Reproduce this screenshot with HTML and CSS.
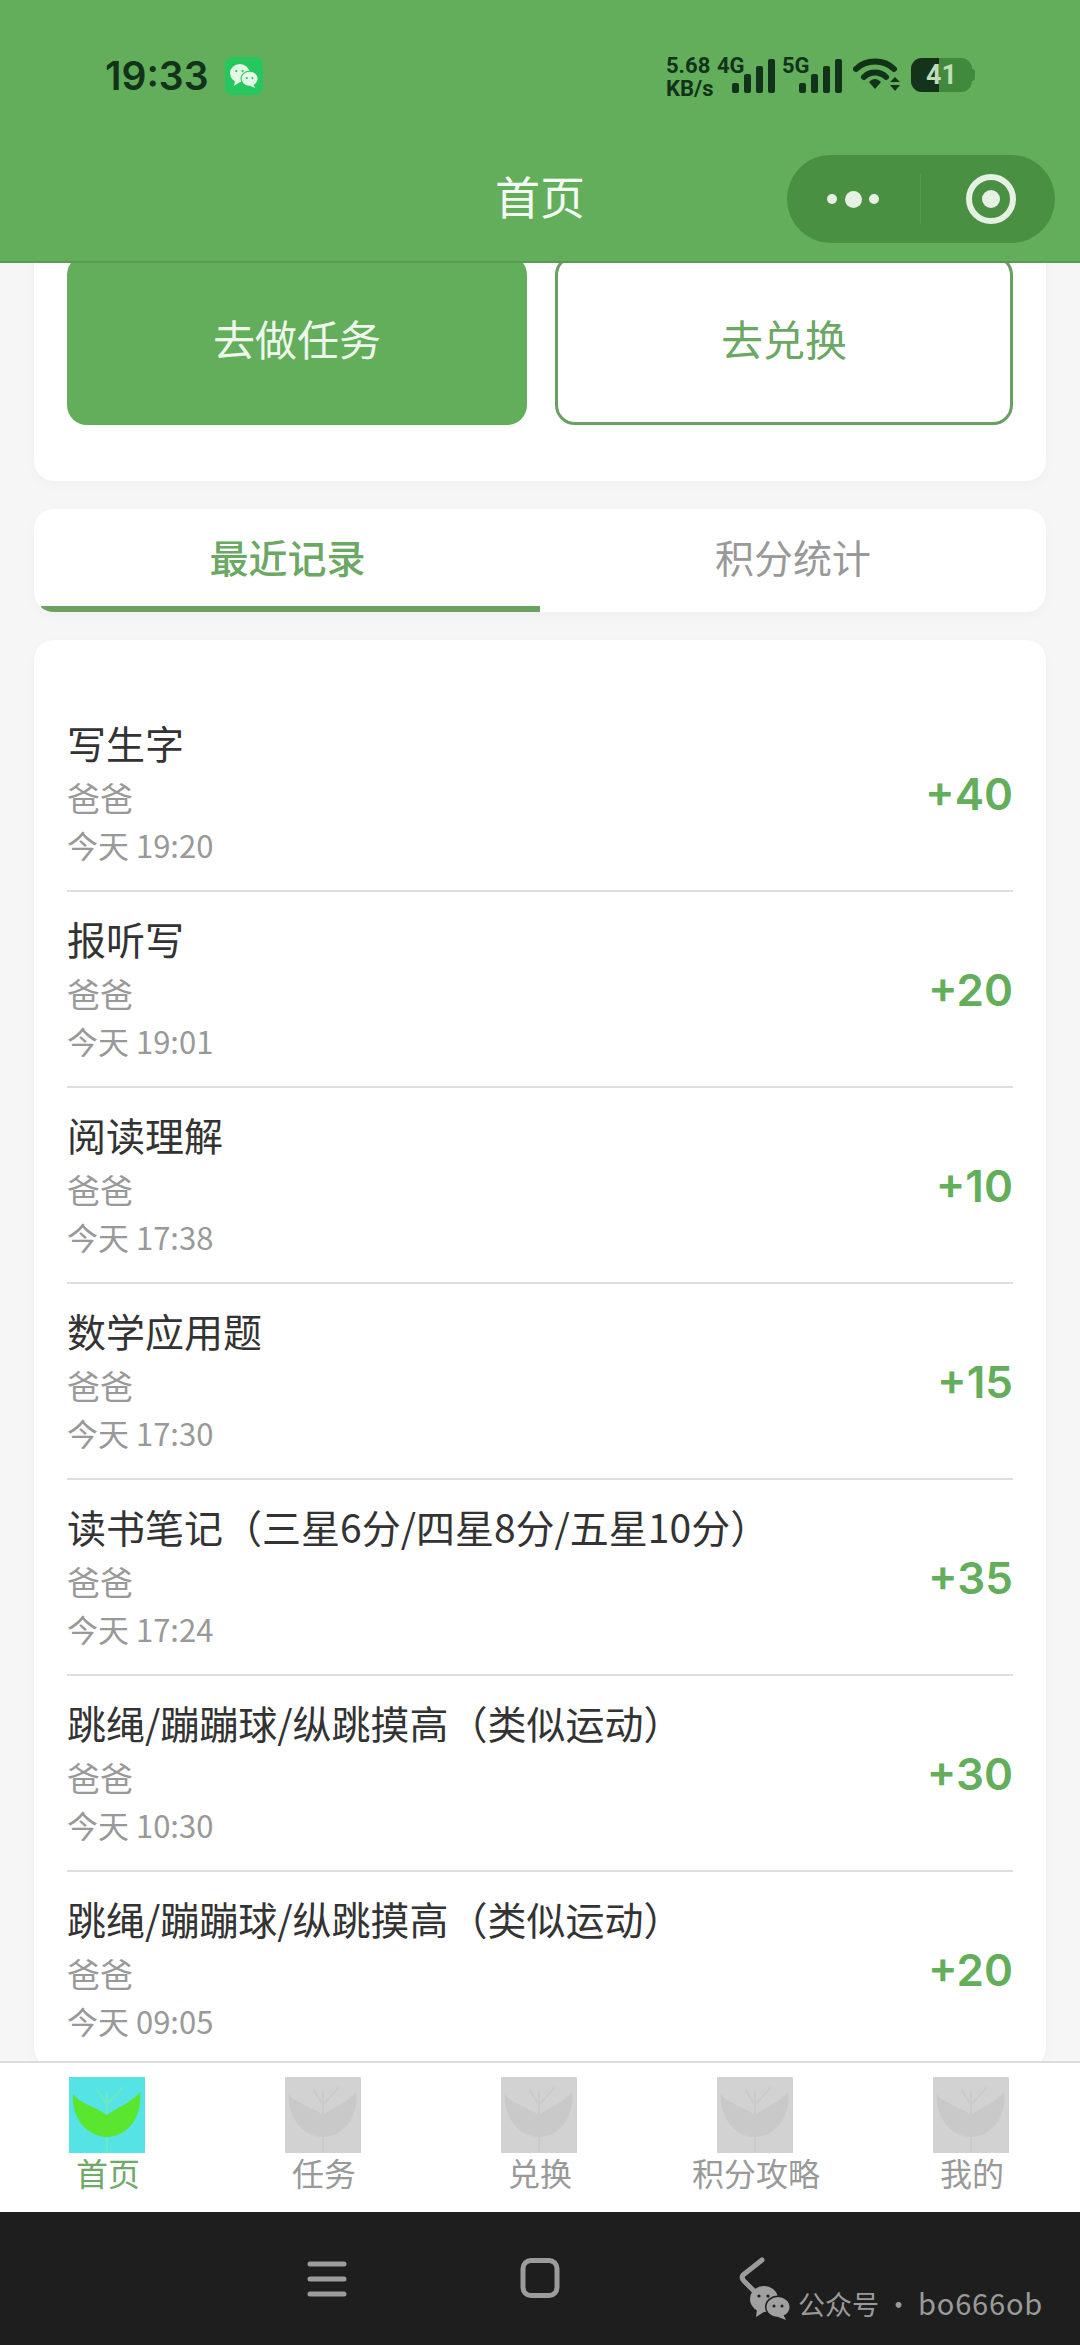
FILE: index.html
```html
<!DOCTYPE html>
<html lang="zh-CN">
<head>
  <meta charset="UTF-8" />
  <meta name="viewport" content="width=device-width, initial-scale=1" />
  <title>首页</title>
  <link rel="stylesheet" href="styles.css">
</head>
<body>
  <svg class="defs" width="0" height="0" aria-hidden="true">
    <symbol id="signal" viewBox="0 0 44 34">
      <rect x="1" y="24" width="7" height="10" rx="2"/>
      <rect x="13" y="15" width="7" height="19" rx="2"/>
      <rect x="25" y="7" width="7" height="27" rx="2"/>
      <rect x="37" y="0" width="7" height="34" rx="2"/>
    </symbol>
    <symbol id="leaf" viewBox="0 0 76 76">
      <rect class="leaf-bg" width="76" height="76"/>
      <path class="leaf-stem" d="M38 76 V14 M38 28 L28 12 M38 28 L54 10"/>
      <path class="leaf-shape" d="M4 17 C10 26 27 30 38 38 C49 30 62 26 71 15 C74 40 58 60 38 60 C18 60 2 40 4 17 Z"/>
    </symbol>
    <symbol id="wechat" viewBox="0 0 40 34">
      <ellipse cx="14" cy="13" rx="14" ry="13"/>
      <path d="M7 23 L6 31 L14 26 Z"/>
      <ellipse class="wechat-cut" cx="28" cy="21" rx="13" ry="11.5"/>
      <ellipse cx="28" cy="21" rx="11.5" ry="10"/>
      <path d="M33 28 L36 34 L28 31 Z"/>
      <circle class="wechat-cut" cx="9" cy="10" r="1.6"/>
      <circle class="wechat-cut" cx="18" cy="10" r="1.6"/>
      <circle class="wechat-cut" cx="24" cy="20" r="1.5"/>
      <circle class="wechat-cut" cx="32" cy="20" r="1.5"/>
    </symbol>
  </svg>

  <header class="top">
    <div class="status-bar">
      <div class="status-left">
        <span class="clock">19:33</span>
        <span class="wechat-badge"><svg width="28" height="24"><use href="#wechat"/></svg></span>
      </div>
      <div class="status-right">
        <div class="net-speed"><span>5.68</span><span>KB/s</span></div>
        <div class="sim"><span class="sim-label">4G</span><svg class="signal" width="44" height="34"><use href="#signal"/></svg></div>
        <div class="sim sim-five"><span class="sim-label">5G</span><svg class="signal" width="44" height="34"><use href="#signal"/></svg></div>
        <svg class="wifi" width="48" height="34" viewBox="0 0 48 34">
          <path class="wifi-arc" d="M3 11 C13 1 31 1 41 11"/>
          <path class="wifi-arc" d="M11 19 C17 13 27 13 33 19"/>
          <path d="M16 24 C20 20 24 20 28 24 L22 31 Z"/>
          <path d="M42 19 L47 24 H37 Z M37 27 H47 L42 33 Z"/>
        </svg>
        <div class="battery">
          <span class="battery-body"><span class="battery-level"></span><span class="battery-num">41</span></span>
          <span class="battery-tip"></span>
        </div>
      </div>
    </div>
    <div class="title-bar">
      <span></span>
      <h1 class="page-title">首页</h1>
      <div class="capsule">
        <div class="capsule-dots"><i></i><i class="big"></i><i></i></div>
        <div class="capsule-line"></div>
        <div class="capsule-ring"><i></i></div>
      </div>
    </div>
  </header>

  <main class="content">
    <section class="card action-card">
      <button class="action-btn primary">去做任务</button>
      <button class="action-btn outline">去兑换</button>
    </section>

    <nav class="card tabs">
      <div class="tab active">最近记录</div>
      <div class="tab">积分统计</div>
    </nav>

    <section class="card records">
      <div class="record">
        <div class="record-info"><div class="record-name">写生字</div><div class="record-who">爸爸</div><div class="record-time">今天 19:20</div></div>
        <div class="record-score">+40</div>
      </div>
      <div class="record">
        <div class="record-info"><div class="record-name">报听写</div><div class="record-who">爸爸</div><div class="record-time">今天 19:01</div></div>
        <div class="record-score">+20</div>
      </div>
      <div class="record">
        <div class="record-info"><div class="record-name">阅读理解</div><div class="record-who">爸爸</div><div class="record-time">今天 17:38</div></div>
        <div class="record-score">+10</div>
      </div>
      <div class="record">
        <div class="record-info"><div class="record-name">数学应用题</div><div class="record-who">爸爸</div><div class="record-time">今天 17:30</div></div>
        <div class="record-score">+15</div>
      </div>
      <div class="record">
        <div class="record-info"><div class="record-name">读书笔记（三星6分/四星8分/五星10分）</div><div class="record-who">爸爸</div><div class="record-time">今天 17:24</div></div>
        <div class="record-score">+35</div>
      </div>
      <div class="record">
        <div class="record-info"><div class="record-name">跳绳/蹦蹦球/纵跳摸高（类似运动）</div><div class="record-who">爸爸</div><div class="record-time">今天 10:30</div></div>
        <div class="record-score">+30</div>
      </div>
      <div class="record">
        <div class="record-info"><div class="record-name">跳绳/蹦蹦球/纵跳摸高（类似运动）</div><div class="record-who">爸爸</div><div class="record-time">今天 09:05</div></div>
        <div class="record-score">+20</div>
      </div>
    </section>
  </main>

  <footer class="tabbar">
    <div class="tabbar-item active"><svg class="tabbar-icon" width="76" height="76"><use href="#leaf"/></svg><span>首页</span></div>
    <div class="tabbar-item"><svg class="tabbar-icon" width="76" height="76"><use href="#leaf"/></svg><span>任务</span></div>
    <div class="tabbar-item"><svg class="tabbar-icon" width="76" height="76"><use href="#leaf"/></svg><span>兑换</span></div>
    <div class="tabbar-item"><svg class="tabbar-icon" width="76" height="76"><use href="#leaf"/></svg><span>积分攻略</span></div>
    <div class="tabbar-item"><svg class="tabbar-icon" width="76" height="76"><use href="#leaf"/></svg><span>我的</span></div>
  </footer>

  <div class="sys-nav">
    <svg width="40" height="42" viewBox="0 0 40 42"><path class="sys-stroke" d="M3 8 H37 M3 23 H37 M3 38 H37"/></svg>
    <svg width="40" height="44" viewBox="0 0 40 44"><rect class="sys-stroke" x="3" y="4.5" width="34" height="35" rx="8"/></svg>
    <svg width="40" height="40" viewBox="0 0 40 40"><path class="sys-stroke" d="M29 4 L10 19 Q8 22 11 25 L22 36"/></svg>
    <div class="watermark">
      <svg width="40" height="34"><use href="#wechat"/></svg>
      <span>公众号 · <span class="watermark-id">bo666ob</span></span>
    </div>
  </div>
</body>
</html>
```

FILE: styles.css
```css
* {
  box-sizing: border-box;
}
html, body {
  margin: 0;
  height: 2345px;
  overflow: hidden;
}
body {
  display: flex;
  flex-direction: column;
  position: relative;
  background: #f6f6f6;
  font-family: "Noto Sans CJK SC", "Noto Sans", sans-serif;
}
.defs {
  position: absolute;
}

/* green top area */
.top {
  height: 263px;
  flex-shrink: 0;
  background: #62ae5a;
  border-bottom: 2px solid #5b9a55;
}
.status-bar {
  height: 155px;
  padding: 54px 105px 0 105px;
  display: flex;
  justify-content: space-between;
  align-items: flex-start;
  color: #12331a;
}
.status-left {
  display: flex;
  align-items: center;
  gap: 16px;
}
.clock {
  font-family: Inter, Roboto, sans-serif;
  font-size: 39px;
  font-weight: 600;
  line-height: 44px;
}
.wechat-badge {
  width: 38px;
  height: 38px;
  border-radius: 8px;
  background: #27c75f;
  display: flex;
  align-items: center;
  justify-content: center;
  fill: #e4f8e6;
  --cut: #27c75f;
}
.wechat-cut {
  fill: var(--cut);
}
.status-right {
  display: flex;
  align-items: flex-start;
  font-family: Roboto, sans-serif;
  font-weight: 700;
}
.net-speed {
  display: flex;
  flex-direction: column;
  width: 45px;
  font-size: 22px;
  line-height: 23px;
  margin-right: 6px;
  white-space: nowrap;
}
.sim {
  display: flex;
  align-items: flex-start;
  position: relative;
  width: 58px;
  height: 40px;
  fill: #12331a;
  margin-right: 7px;
}
.sim-five {
  width: 60px;
  margin-right: 11px;
}
.sim-label {
  font-size: 22px;
  line-height: 23px;
}
.signal {
  position: absolute;
  right: 0;
  top: 5px;
}
.wifi {
  margin: 4px 10px 0 0;
  fill: #12331a;
}
.wifi-arc {
  fill: none;
  stroke: #12331a;
  stroke-width: 6;
  stroke-linecap: round;
}
.battery {
  display: flex;
  align-items: center;
  margin-top: 4px;
}
.battery-body {
  display: block;
  position: relative;
  width: 61px;
  height: 34px;
  border-radius: 11px;
  overflow: hidden;
  background: #3f8a3c;
}
.battery-level {
  display: block;
  width: 28px;
  height: 100%;
  background: #14331a;
}
.battery-num {
  position: absolute;
  top: 0;
  left: 15px;
  font-size: 27px;
  line-height: 34px;
  color: #c0dcb8;
}
.battery-tip {
  width: 3px;
  height: 12px;
  border-radius: 0 3px 3px 0;
  background: #3f8a3c;
}
.title-bar {
  height: 88px;
  padding: 0 25px;
  display: grid;
  grid-template-columns: 1fr auto 1fr;
  align-items: center;
}
.page-title {
  margin: 0 0 6px;
  font-size: 45px;
  line-height: 60px;
  font-weight: 400;
  color: #f4faf3;
}
.capsule {
  justify-self: end;
  width: 268px;
  height: 88px;
  border-radius: 44px;
  background: #4a9043;
  display: flex;
  align-items: center;
  padding-left: 40px;
}
.capsule-dots {
  width: 52px;
  display: flex;
  align-items: center;
  justify-content: space-between;
}
.capsule-dots i {
  display: block;
  width: 10px;
  height: 10px;
  border-radius: 50%;
  background: #e6f1e3;
}
.capsule-dots i.big {
  width: 17px;
  height: 17px;
}
.capsule-line {
  width: 1px;
  height: 50px;
  margin-left: 41px;
  background: #569b4f;
}
.capsule-ring {
  width: 50px;
  height: 50px;
  margin-left: 45px;
  border: 6px solid #e6f1e3;
  border-radius: 50%;
  display: flex;
  align-items: center;
  justify-content: center;
}
.capsule-ring i {
  display: block;
  width: 18px;
  height: 18px;
  border-radius: 50%;
  background: #e6f1e3;
}

/* scrolled content */
.content {
  flex: 1;
  min-height: 0;
  overflow: hidden;
  padding: 0 34px;
  display: flex;
  flex-direction: column;
}
.card {
  background: #fff;
  border-radius: 20px;
  box-shadow: 0 4px 12px rgba(0, 0, 0, 0.03);
  flex-shrink: 0;
}
.action-card {
  margin-top: -38px;
  padding: 30px 33px 56px;
  display: grid;
  grid-template-columns: 460px 458px;
  gap: 28px;
}
.action-btn {
  height: 170px;
  border-radius: 20px;
  font-family: inherit;
  font-size: 42px;
  padding: 0 0 6px;
}
.primary {
  border: none;
  background: #62ae5a;
  color: #eef7ec;
}
.outline {
  border: 3px solid #6a9f63;
  background: #fff;
  color: #6aa863;
}
.tabs {
  margin-top: 28px;
  height: 103px;
  display: flex;
  overflow: hidden;
}
.tab {
  width: 50%;
  padding-top: 19px;
  text-align: center;
  font-size: 39px;
  line-height: 56px;
  color: #999;
}
.tab.active {
  margin-left: 7px;
  width: 499px;
  padding-right: 6px;
  color: #6aa863;
  font-weight: 500;
  border-bottom: 6px solid #6aa35f;
  border-radius: 0 0 0 5px;
}
.records {
  margin-top: 28px;
  padding: 56px 33px 0;
}
.record {
  height: 196px;
  padding-top: 22px;
  border-bottom: 2px solid #dedede;
  display: flex;
  justify-content: space-between;
  align-items: flex-start;
}
.record:last-child {
  border-bottom: none;
}
.record-name {
  font-size: 39px;
  line-height: 48px;
  color: #333;
}
.record-who {
  margin-top: 8px;
  font-size: 33px;
  line-height: 46px;
  color: #999;
}
.record-time {
  font-size: 31px;
  line-height: 50px;
  color: #999;
}
.record-score {
  margin-top: 49px;
  font-family: Inter, Roboto, sans-serif;
  font-size: 44px;
  font-weight: 600;
  line-height: 54px;
  color: #62ae5a;
}

/* bottom tabs */
.tabbar {
  height: 151px;
  flex-shrink: 0;
  background: #fff;
  border-top: 2px solid #dcdcdc;
  display: grid;
  grid-template-columns: repeat(5, 1fr);
}
.tabbar-item {
  padding-top: 14px;
  display: flex;
  flex-direction: column;
  align-items: center;
  font-size: 32px;
  line-height: 38px;
  color: #999;
  --bg: #d2d2d2;
  --leaf: #c9c9c9;
  --stem: #cbcbcb;
}
.tabbar-item.active {
  color: #6fa968;
  --bg: #55e3e6;
  --leaf: #5ae62e;
  --stem: #6ce8c0;
}
.tabbar-icon {
  display: block;
  margin-right: 2px;
}
.leaf-bg {
  fill: var(--bg);
}
.leaf-shape {
  fill: var(--leaf);
}
.leaf-stem {
  fill: none;
  stroke: var(--stem);
  stroke-width: 2;
}

/* system nav */
.sys-nav {
  height: 133px;
  flex-shrink: 0;
  position: relative;
  background: #1e1e1e;
  display: grid;
  grid-template-columns: repeat(3, 213px);
  justify-content: center;
  justify-items: center;
  padding-top: 44px;
  align-items: start;
}
.sys-stroke {
  fill: none;
  stroke: #9c9c9c;
  stroke-width: 5;
  stroke-linecap: round;
  stroke-linejoin: round;
}
.watermark {
  position: absolute;
  left: 750px;
  top: 70px;
  display: flex;
  align-items: center;
  gap: 8px;
  fill: #a0a0a0;
  --cut: #1e1e1e;
  color: #9a9a9a;
  font-size: 27px;
  line-height: 40px;
}
.watermark-id {
  font-size: 29px;
  letter-spacing: 0.8px;
}
```
